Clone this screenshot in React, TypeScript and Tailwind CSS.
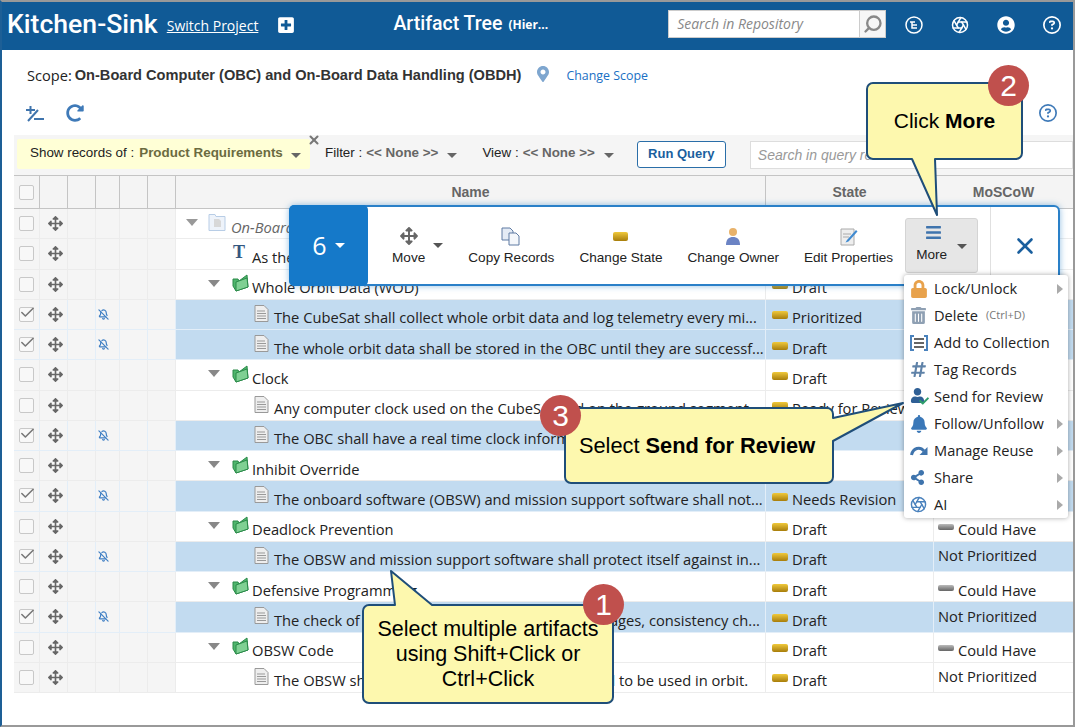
import { Aperture, BellOff, Check, Search, X } from "lucide-react";
import {
  FaArrowsAlt,
  FaBars,
  FaBell,
  FaHashtag,
  FaLock,
  FaMapMarkerAlt,
  FaPlusSquare,
  FaRedoAlt,
  FaShareAlt,
  FaTrashAlt,
  FaUser,
  FaCheck,
  FaUserCircle,
} from "react-icons/fa";
import { FaRegCircleQuestion } from "react-icons/fa6";

const rows = [
  { kind: "root", text: "On-Board Computer (OBC) and On-Board Data Handling (OBDH)", state: "Draft", moscow: "" },
  { kind: "text", text: "As the", state: "", moscow: "" },
  { kind: "folder", text: "Whole Orbit Data (WOD)", state: "Draft", moscow: "" },
  { kind: "doc", sel: true, text: "The CubeSat shall collect whole orbit data and log telemetry every mi...", state: "Prioritized", moscow: "" },
  { kind: "doc", sel: true, text: "The whole orbit data shall be stored in the OBC until they are successf...", state: "Draft", moscow: "" },
  { kind: "folder", text: "Clock", state: "Draft", moscow: "" },
  { kind: "doc", text: "Any computer clock used on the CubeSat and on the ground segment ...", state: "Ready for Review", moscow: "" },
  { kind: "doc", sel: true, text: "The OBC shall have a real time clock information available to the OBSW", state: "Draft", moscow: "" },
  { kind: "folder", text: "Inhibit Override", state: "Draft", moscow: "" },
  { kind: "doc", sel: true, text: "The onboard software (OBSW) and mission support software shall not...", state: "Needs Revision", moscow: "" },
  { kind: "folder", text: "Deadlock Prevention", state: "Draft", moscow: "Could Have" },
  { kind: "doc", sel: true, text: "The OBSW and mission support software shall protect itself against in...", state: "Draft", moscow: "Not Prioritized" },
  { kind: "folder", text: "Defensive Programming", state: "Draft", moscow: "Could Have" },
  { kind: "doc", sel: true, text: "The check of input parameter value ranges, messages, consistency ch...", state: "Draft", moscow: "Not Prioritized" },
  { kind: "folder", text: "OBSW Code", state: "Draft", moscow: "Could Have" },
  { kind: "doc", text: "The OBSW shall only use code which is authorized to be used in orbit.", state: "Draft", moscow: "Not Prioritized" },
];

const menu = [
  { label: "Lock/Unlock", icon: <FaLock className="text-[#e8a24c]" size={18} />, more: true },
  { label: "Delete", hint: "(Ctrl+D)", icon: <FaTrashAlt className="text-[#8fa0b3]" size={17} /> },
  { label: "Add to Collection", icon: <CollectionIcon /> },
  { label: "Tag Records", icon: <FaHashtag className="text-[#5f82a8]" size={17} /> },
  { label: "Send for Review", icon: <ReviewIcon /> },
  { label: "Follow/Unfollow", icon: <FaBell className="text-[#3b78b8]" size={18} />, more: true },
  { label: "Manage Reuse", icon: <ReuseIcon />, more: true },
  { label: "Share", icon: <FaShareAlt className="text-[#3f74ad]" size={15} />, more: true },
  { label: "AI", icon: <Aperture className="text-[#4a82bd]" size={17} />, more: true },
];

function ReviewIcon() {
  return (
    <span className="relative block h-[18px] w-[19px]">
      <FaUser size={15} className="text-[#2f5f95]" />
      <FaCheck size={10} className="absolute right-0 bottom-0 text-[#2f9e6b]" />
    </span>
  );
}

function CollectionIcon() {
  return (
    <svg width="18" height="16" viewBox="0 0 18 16">
      <path d="M4 1H1v14h3M14 1h3v14h-3" fill="none" stroke="#4a82bd" strokeWidth="2" />
      <path d="M4 4h10M4 8h10M4 12h10" stroke="#666" strokeWidth="2" />
    </svg>
  );
}

function ReuseIcon() {
  return (
    <svg width="18" height="14" viewBox="0 0 18 14">
      <path d="M1.500 11C3 4 10 2 14 7" fill="none" stroke="#3f74ad" strokeWidth="3" />
      <path d="M17.500 3v8h-8z" fill="#3f74ad" />
    </svg>
  );
}

function DocIcon() {
  return (
    <svg width="15" height="17" viewBox="0 0 15 17" className="shrink-0">
      <path d="M1 .5h9l4 4v12H1z" fill="#eee" stroke="#999" />
      <path d="M3 6h8M3 8.500h9M3 11h9M3 13.500h9" stroke="#999" />
    </svg>
  );
}

function FolderIcon() {
  return (
    <svg width="17" height="18" viewBox="0 0 17 18" className="shrink-0">
      <path d="M1 5h5l1 2 8-6 1 12-12 4-3-5z" fill="#4fb56c" stroke="#2a8a49" />
      <path d="M4 8l11-4 1 9-12 4z" fill="#7fd093" stroke="#2a8a49" />
    </svg>
  );
}

function RootIcon() {
  return (
    <svg width="18" height="19" viewBox="0 0 18 19" className="shrink-0">
      <path d="M1 17.500V1.500h6l1 2h9v14z" fill="#eef3fa" stroke="#b8cde6" />
      <path d="M6 6h5l2 2v6H6z" fill="#d8d8d8" />
    </svg>
  );
}

function Caret({ className }: { className: string }) {
  return <span className={`inline-block border-x-[5px] border-t-[5px] border-x-transparent ${className}`} />;
}

function Pill({ color }: { color: "gold" | "gray" }) {
  return (
    <span
      className={
        color === "gold"
          ? "mr-[4px] -mt-[4px] inline-block h-[8px] w-[16px] shrink-0 rounded-[2px] bg-gradient-to-b from-[#f0c93a] to-[#a87e0a]"
          : "mr-[4px] -mt-[4px] inline-block h-[6px] w-[16px] shrink-0 rounded-[2px] bg-gradient-to-b from-[#bbb] to-[#666]"
      }
    />
  );
}

function Checkbox({ checked }: { checked?: boolean }) {
  return (
    <span className="relative block h-[15px] w-[15px] rounded-[2px] border border-[#c8c8c8] bg-[#f8f8f8]">
      {checked && <Check size={17} strokeWidth={2.2} className="absolute -top-[4px] -left-[1px] text-[#777]" />}
    </span>
  );
}

function Row({ row }: { row: (typeof rows)[number] }) {
  const sel = row.sel;
  const side = `flex items-center justify-center border-r ${sel ? "border-[#e3eef8] bg-[#f5f5f5]" : "border-[#ececec] bg-[#f5f5f5]"}`;
  const text = row.kind === "root" ? "italic text-[#666]" : "text-[#222]";
  return (
    <div
      className={`grid h-[30.25px] grid-cols-[26px_28px_28px_24px_28px_28px_589px_168px_1fr] border-b text-[14.7px] ${
        sel ? "border-[#e3eef8]" : "border-[#ececec]"
      }`}
    >
      <div className={side}><Checkbox checked={sel} /></div>
      <div className={`${side} pl-[3px]`}><FaArrowsAlt size={15} className="text-[#666]" /></div>
      <div className={side} />
      <div className={`${side} pr-[8px]`}>{sel && <BellOff size={11} strokeWidth={2.6} className="text-[#3f7fc4]" />}</div>
      <div className={side} />
      <div className={side} />
      <div className={`flex items-center whitespace-nowrap overflow-hidden pt-[6px] ${sel ? "bg-[#c2dbf0]" : ""}`}>
        {row.kind === "root" && (
          <>
            <Caret className="ml-[10px] mr-[10px] -mt-[8px] border-t-[#999] border-x-[6px] border-t-[7px]" />
            <span className="-mt-[8px]"><RootIcon /></span>
            <span className={`ml-[5px] ${text}`}>{row.text}</span>
          </>
        )}
        {row.kind === "text" && (
          <>
            <span className="ml-[57px] -mt-[8px] mr-[7px] font-['Liberation_Serif'] text-[18px] font-bold text-[#34577f]">T</span>
            <span className={text}>{row.text}</span>
          </>
        )}
        {row.kind === "folder" && (
          <>
            <Caret className="ml-[32px] mr-[12px] -mt-[8px] border-t-[#888] border-x-[6px] border-t-[7px]" />
            <span className="-mt-[8px]"><FolderIcon /></span>
            <span className={`ml-[3px] ${text}`}>{row.text}</span>
          </>
        )}
        {row.kind === "doc" && (
          <>
            <span className="ml-[78px] -mt-[8px]"><DocIcon /></span>
            <span className={`ml-[5px] ${text}`}>{row.text}</span>
          </>
        )}
      </div>
      <div className={`flex items-center border-l pl-[6px] pt-[6px] whitespace-nowrap overflow-hidden ${sel ? "border-[#e3eef8] bg-[#c2dbf0]" : "border-[#ececec]"}`}>
        {row.state && <Pill color="gold" />}
        <span className="text-[#222]">{row.state}</span>
      </div>
      <div className={`flex items-center border-l pl-[4px] whitespace-nowrap overflow-hidden ${sel ? "border-[#e3eef8] bg-[#c2dbf0]" : "border-[#ececec]"}`}>
        {row.moscow === "Could Have" && (
          <span className="flex items-center pt-[6px] text-[#222]"><Pill color="gray" />Could Have</span>
        )}
        {row.moscow === "Not Prioritized" && <span className="pb-[2px] text-[#222]">Not Prioritized</span>}
      </div>
    </div>
  );
}

function ToolItem({ icon, label, caret }: { icon: React.ReactNode; label: string; caret?: boolean }) {
  return (
    <div className="relative flex flex-col items-center">
      <div className="flex h-[24px] items-center justify-center">{icon}</div>
      <span className="mt-[1px] text-[13.6px] leading-[18px] text-[#222]">{label}</span>
      {caret && <Caret className="absolute -right-[18px] top-[19px] border-t-[#555]" />}
    </div>
  );
}

function Badge({ n, className }: { n: number; className: string }) {
  return (
    <div
      className={`absolute flex h-[41px] w-[41px] items-center justify-center rounded-full bg-[#c0504d] font-['Liberation_Sans'] text-[30px] text-white ${className}`}
    >
      {n}
    </div>
  );
}

export default function App() {
  return (
    <div className="relative h-[727px] w-[1075px] overflow-hidden border-2 border-[#999] border-l-[#1d5f96] bg-white font-['Open_Sans',sans-serif] text-[#222]">
      {/* top bar */}
      <header className="flex h-[48px] items-center bg-[#105a96] pb-[4px] text-white">
        <span className="ml-[5px] font-['Roboto'] text-[26.6px] font-medium leading-none">Kitchen-Sink</span>
        <a className="ml-[9px] mt-[3px] text-[14px] underline">Switch Project</a>
        <FaPlusSquare size={18} className="ml-[19px] mt-[2px]" />
        <span className="ml-[98px] font-['Roboto'] text-[19.5px] font-medium">Artifact Tree</span>
        <span className="ml-[6px] mt-[2px] text-[12px] font-bold">(Hier...</span>
        <div className="ml-[120px] flex h-[28px] w-[218px] border border-[#ccc] bg-white">
          <span className="flex-1 pl-[8px] text-[14px] italic leading-[26px] text-[#888]">Search in Repository</span>
          <span className="flex w-[26px] items-center justify-center border-l border-[#ccc] bg-[#f6f6f6]">
            <Search size={20} strokeWidth={2.8} className="-scale-x-100 text-[#888]" />
          </span>
        </div>
        <div className="ml-[19px] mt-[2px] flex items-center gap-[28px]">
          <svg width="18" height="18" viewBox="0 0 18 18" fill="none" stroke="white" strokeWidth="1.500">
            <circle cx="9" cy="9" r="8" />
            <path d="M5 6h5M7 6v6h5M7 9h5" />
          </svg>
          <Aperture size={18} />
          <FaUserCircle size={18} />
          <FaRegCircleQuestion size={18} />
        </div>
      </header>

      {/* scope */}
      <div className="flex h-[50px] items-center pl-[25px] pt-[2px]">
        <span className="text-[14.6px]">Scope:</span>
        <span className="ml-[3px] font-['Liberation_Sans'] text-[14.6px] font-bold text-[#333]">
          On-Board Computer (OBC) and On-Board Data Handling (OBDH)
        </span>
        <FaMapMarkerAlt size={16} className="ml-[14px] -mt-[4px] text-[#7ea6cf]" />
        <a className="ml-[15px] text-[12.4px] text-[#1a6fc4]">Change Scope</a>
      </div>

      {/* actions */}
      <div className="flex h-[35px] items-start pt-[4px] pr-[16px] pl-[23px]">
        <svg width="20" height="20" viewBox="0 0 20 20" stroke="#3f74ad" strokeWidth="2" fill="none">
          <path d="M1 6h9M5.500 2v8M3 17L13 6M9 15h10" />
        </svg>
        <FaRedoAlt size={18} className="ml-[21px] text-[#3f7ab8]" />
        <FaRegCircleQuestion size={18} className="ml-auto text-[#3f7ab8]" />
      </div>

      {/* filters */}
      <div className="ml-[12px] flex h-[40px] items-center bg-[#f5f5f5] font-['Liberation_Sans'] text-[13.4px]">
        <div className="ml-[3px] -mt-[3px] flex h-[30px] w-[293px] items-center rounded-[2px] bg-[#ffffd6] pl-[13px]">
          Show records of :
          <span className="ml-[5px] font-bold text-[#6b6b40]">Product Requirements</span>
          <Caret className="ml-[8px] mt-[3px] border-t-[#666]" />
        </div>
        <X size={14} strokeWidth={3.5} className="-mt-[30px] -ml-[3px] shrink-0 text-[#777]" />
        <span className="ml-[4px] -mt-[3px]">Filter :</span>
        <span className="ml-[4px] -mt-[3px] font-bold text-[#666]">&lt;&lt; None &gt;&gt;</span>
        <Caret className="ml-[9px] border-t-[#666]" />
        <span className="ml-[25px] -mt-[3px]">View :</span>
        <span className="ml-[4px] -mt-[3px] font-bold text-[#666]">&lt;&lt; None &gt;&gt;</span>
        <Caret className="ml-[9px] border-t-[#666]" />
        <button className="ml-[23px] -mt-[2px] h-[27px] w-[89px] rounded-[3px] border border-[#2a6ea8] bg-white text-[13px] font-bold text-[#1a5f9e]">
          Run Query
        </button>
        <div className="ml-[24px] h-[28px] flex-1 border border-[#ddd] bg-white pl-[7px] text-[14px] italic leading-[26px] text-[#999]">
          Search in query results
        </div>
      </div>

      {/* table */}
      <div className="ml-[12px]">
        <div className="grid h-[34px] grid-cols-[26px_28px_28px_24px_28px_28px_589px_168px_1fr] border-y border-[#c4c4c4] bg-[#f4f4f4] font-['Liberation_Sans'] text-[14px] font-bold text-[#666]">
          <div className="flex items-center justify-center border-r border-[#c4c4c4]"><Checkbox /></div>
          <div className="border-r border-[#c4c4c4]" />
          <div className="border-r border-[#c4c4c4]" />
          <div className="border-r border-[#c4c4c4]" />
          <div className="border-r border-[#c4c4c4]" />
          <div className="border-r border-[#c4c4c4]" />
          <div className="flex items-center justify-center">Name</div>
          <div className="flex items-center justify-center border-l border-[#c4c4c4]">State</div>
          <div className="flex items-center justify-center border-l border-[#c4c4c4]">MoSCoW</div>
        </div>
        {rows.map((row, i) => (
          <Row key={i} row={row} />
        ))}
      </div>

      {/* floating selection toolbar */}
      <div className="absolute top-[203px] left-[287px] flex h-[81px] w-[771px] rounded-[6px] border-2 border-[#2a80c8] bg-white font-['Liberation_Sans'] shadow-[0_0_6px_rgba(42,128,200,0.5)]">
        <div className="-m-[2px] flex h-[81px] w-[79px] shrink-0 items-center justify-center gap-[8px] rounded-[5px] bg-[#1579c9] text-[25px] text-white">
          <span className="font-['Open_Sans']">6</span>
          <Caret className="border-t-white" />
        </div>
        <div className="ml-[2px] flex flex-1 items-center">
          <div className="ml-[24px]"><ToolItem label="Move" caret icon={<FaArrowsAlt size={18} className="text-[#666]" />} /></div>
          <div className="ml-[43px]"><ToolItem label="Copy Records" icon={<svg width="20" height="19" viewBox="0 0 20 19"><path d="M1 1h8l3 3v9H1z" fill="#e4ebf5" stroke="#5f7ba3" /><path d="M8 6h7l3 3v9H8z" fill="#f4f7fb" stroke="#5f7ba3" /></svg>} /></div>
          <div className="ml-[25px]"><ToolItem label="Change State" icon={<span className="h-[9px] w-[15px] rounded-[2px] bg-gradient-to-b from-[#f0c93a] to-[#a87e0a]" />} /></div>
          <div className="ml-[25px]"><ToolItem label="Change Owner" icon={<svg width="16" height="19" viewBox="0 0 16 19"><circle cx="8" cy="5" r="4" fill="#e8b26a" /><path d="M1 18c0-6 3-8 7-8s7 2 7 8z" fill="#6b83c4" /></svg>} /></div>
          <div className="ml-[25px]"><ToolItem label="Edit Properties" icon={<svg width="18" height="19" viewBox="0 0 18 19"><path d="M1 2h13v16H1z" fill="#eee" stroke="#aaa" /><path d="M3 7h8M3 10h6" stroke="#aaa" /><path d="M7 13l9-10 1.500 1.500-9 10-3 1z" fill="#3f8ad0" /></svg>} /></div>
          <div className="relative ml-[12px] flex h-[55px] w-[73px] shrink-0 flex-col items-start rounded-[3px] border border-[#d4d4d4] bg-[#e6e6e6] pl-[10px] pt-[5px]">
            <FaBars size={17} className="ml-[9px] text-[#3f74ad]" />
            <span className="mt-[5px] text-[13.6px] leading-[18px] text-[#222]">More</span>
            <Caret className="absolute right-[10px] top-[25px] border-t-[#555]" />
          </div>
          <div className="ml-[12px] flex h-full flex-1 items-center justify-center border-l border-[#e0e0e0]">
            <X size={26} strokeWidth={2.4} className="text-[#1a5f9e]" />
          </div>
        </div>
      </div>

      {/* more menu */}
      <div className="absolute top-[273px] left-[902px] w-[164px] rounded-[3px] bg-white text-[14.6px] shadow-[0_0_5px_rgba(0,0,0,0.35)]">
        {menu.map((m) => (
          <div key={m.label} className="flex h-[27px] items-center pl-[6px]">
            <span className="flex w-[24px] shrink-0 justify-start">{m.icon}</span>
            <span className="text-[#222]">{m.label}</span>
            {m.hint && <span className="ml-[8px] text-[11px] text-[#777]">{m.hint}</span>}
            {m.more && <span className="mr-[5px] ml-auto border-y-[5px] border-l-[6px] border-y-transparent border-l-[#aaa]" />}
          </div>
        ))}
      </div>

      {/* callouts */}
      <svg className="absolute top-0 left-0" width="1075" height="727" viewBox="2 2 1075 727">
        <g fill="#fdf8ae" stroke="#1f4e79" strokeWidth="2" strokeLinejoin="round">
          <path d="M873 83H1016a6 6 0 0 1 6 6V153a6 6 0 0 1-6 6H935L937 215 912 159H873a6 6 0 0 1-6-6V89a6 6 0 0 1 6-6Z" />
          <path d="M369 605H395L391 571 432 605H607a6 6 0 0 1 6 6V697a6 6 0 0 1-6 6H369a6 6 0 0 1-6-6V611a6 6 0 0 1 6-6Z" />
          <path d="M571 408H827a6 6 0 0 1 6 6V418L903 403 833 441V477a6 6 0 0 1-6 6H571a6 6 0 0 1-6-6V414a6 6 0 0 1 6-6Z" />
        </g>
      </svg>
      <div className="absolute top-[81px] left-[865px] flex h-[76px] w-[155px] items-center justify-center font-['Liberation_Sans'] text-[21px] text-black">
        <span>Click <b>More</b></span>
      </div>
      <div className="absolute top-[603px] left-[361px] flex h-[98px] w-[250px] items-center justify-center text-center font-['Liberation_Sans'] text-[21.5px] leading-[25px] text-black">
        Select multiple artifacts<br />using Shift+Click or<br />Ctrl+Click
      </div>
      <div className="absolute top-[407px] left-[563px] flex h-[75px] w-[264px] items-center justify-center font-['Liberation_Sans'] text-[21.8px] text-black">
        <span>Select <b>Send for Review</b></span>
      </div>
      <Badge n={2} className="top-[63px] left-[986px]" />
      <Badge n={1} className="top-[582px] left-[581px]" />
      <Badge n={3} className="top-[393px] left-[538px]" />
    </div>
  );
}
